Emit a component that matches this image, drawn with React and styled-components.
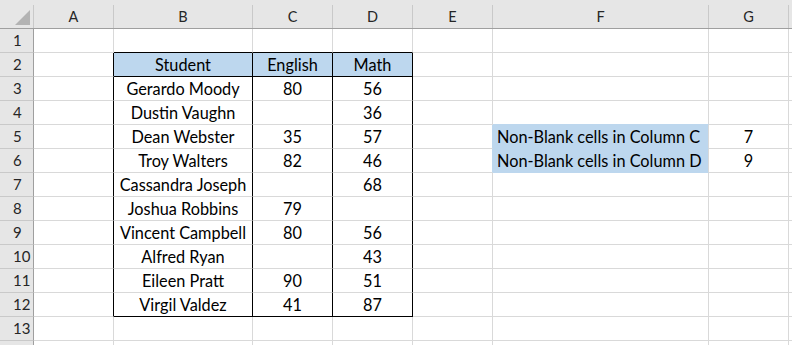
import React from "react";
import styled, { createGlobalStyle } from "styled-components";

const Global = createGlobalStyle`
  html, body { margin: 0; padding: 0; background: #ffffff; }
  body { font-family: Lato, "Open Sans", Arial, sans-serif; overflow: hidden; }
`;

const COLS = [
  { key: "A", w: 80 },
  { key: "B", w: 139 },
  { key: "C", w: 80 },
  { key: "D", w: 80 },
  { key: "E", w: 80 },
  { key: "F", w: 216 },
  { key: "G", w: 80 },
  { key: "H", w: 80, hidden: true },
];

const GRID = "#d9d9d9";
const BLACK = "#000000";
const BLUE = "#bdd7ee";

const DATA = {
  2: { B: "Student", C: "English", D: "Math" },
  3: { B: "Gerardo Moody", C: "80", D: "56" },
  4: { B: "Dustin Vaughn", C: "", D: "36" },
  5: { B: "Dean Webster", C: "35", D: "57", F: "Non-Blank cells in Column C", G: "7" },
  6: { B: "Troy Walters", C: "82", D: "46", F: "Non-Blank cells in Column D", G: "9" },
  7: { B: "Cassandra Joseph", C: "", D: "68" },
  8: { B: "Joshua Robbins", C: "79", D: "" },
  9: { B: "Vincent Campbell", C: "80", D: "56" },
  10: { B: "Alfred Ryan", C: "", D: "43" },
  11: { B: "Eileen Pratt", C: "90", D: "51" },
  12: { B: "Virgil Valdez", C: "41", D: "87" },
};

const Sheet = styled.div`
  width: 792px;
  height: 345px;
  overflow: hidden;
  display: flex;
  flex-direction: column;
  background: #fff;
`;

const HeaderRow = styled.div`
  display: flex;
  flex: none;
  padding-top: 5px;
  background: #e6e6e6;
  border-bottom: 1px solid #9f9f9f;
`;

const Corner = styled.div`
  flex: none;
  width: 33px;
  height: 23px;
  border-right: 1px solid #c9c9c9;
  display: flex;
  align-items: flex-start;
  justify-content: flex-end;
`;

const ColHead = styled.div`
  flex: none;
  box-sizing: border-box;
  width: ${(p) => p.$w}px;
  height: 23px;
  border-right: 1px solid #c9c9c9;
  text-align: center;
  font-size: 14.5px;
  line-height: 23px;
  color: #262626;
`;

const Row = styled.div`
  display: flex;
  flex: none;
  height: 24px;
`;

const RowHead = styled.div`
  flex: none;
  box-sizing: content-box;
  width: 20px;
  height: 23px;
  padding-left: 13px;
  background: #e6e6e6;
  border-right: 1px solid #9f9f9f;
  border-bottom: 1px solid #c9c9c9;
  font-size: 15px;
  line-height: 23px;
  color: #262626;
`;

const Cell = styled.div`
  flex: none;
  box-sizing: border-box;
  width: ${(p) => p.$w}px;
  height: 24px;
  border-right: 1px solid ${(p) => p.$rc || GRID};
  border-bottom: 1px solid ${(p) => p.$bc || GRID};
  background: ${(p) => p.$bg || "transparent"};
  text-align: ${(p) => p.$align || "center"};
  padding-left: ${(p) => (p.$align === "left" ? "4px" : "0")};
  font-size: 16.3px;
  line-height: 23px;
  color: #000;
  white-space: nowrap;
`;

function cellStyle(r, c) {
  const inTable = ["B", "C", "D"].includes(c);
  const tableRow = r >= 2 && r <= 12;
  let rc, bc, bg, align;
  if (tableRow && (inTable || c === "A")) rc = BLACK;
  if (inTable && (r === 1 || r === 2 || r === 12)) bc = BLACK;
  if (inTable && r === 2) bg = BLUE;
  if (c === "F" && (r === 5 || r === 6)) {
    bg = BLUE;
    bc = BLUE;
    align = "left";
  }
  if (c === "F" && r === 4) bc = BLUE;
  if (c === "E" && (r === 5 || r === 6)) rc = BLUE;
  return { rc, bc, bg, align };
}

export default function App() {
  const rows = Array.from({ length: 14 }, (_, i) => i + 1);
  return (
    <>
      <Global />
      <Sheet>
        <HeaderRow>
          <Corner>
            <svg width="22" height="23" viewBox="0 0 22 23">
              <polygon points="4,20 19,20 19,5" fill="#b3b3b3" />
            </svg>
          </Corner>
          {COLS.map((c) => (
            <ColHead key={c.key} $w={c.w}>
              {c.hidden ? "" : c.key}
            </ColHead>
          ))}
        </HeaderRow>
        {rows.map((r) => (
          <Row key={r}>
            <RowHead>{r <= 13 ? r : ""}</RowHead>
            {COLS.map((c) => {
              const s = cellStyle(r, c.key);
              const v = (DATA[r] && DATA[r][c.key]) || "";
              return (
                <Cell
                  key={c.key}
                  $w={c.w}
                  $rc={s.rc}
                  $bc={s.bc}
                  $bg={s.bg}
                  $align={s.align}
                >
                  {v}
                </Cell>
              );
            })}
          </Row>
        ))}
      </Sheet>
    </>
  );
}
